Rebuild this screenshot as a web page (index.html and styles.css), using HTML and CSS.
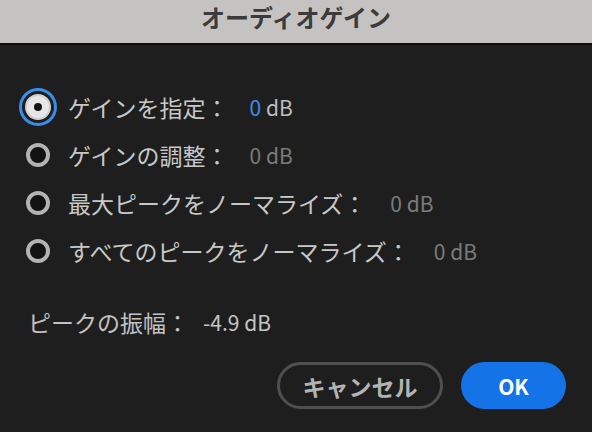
FILE: index.html
```html
<!DOCTYPE html>
<html lang="ja">
<head>
<meta charset="utf-8">
<title>オーディオゲイン</title>
<link rel="stylesheet" href="styles.css">
</head>
<body>
<div class="dialog">
  <header class="titlebar"><h1 class="title">オーディオゲイン</h1></header>
  <main class="content">
    <div class="options">
      <div class="option">
        <span class="radio-wrap"><span class="radio selected"></span></span>
        <span class="label">ゲインを指定：</span>
        <span class="value active"><span class="num">0</span> dB</span>
      </div>
      <div class="option">
        <span class="radio-wrap"><span class="radio"></span></span>
        <span class="label">ゲインの調整：</span>
        <span class="value">0 dB</span>
      </div>
      <div class="option">
        <span class="radio-wrap"><span class="radio"></span></span>
        <span class="label">最大ピークをノーマライズ：</span>
        <span class="value wide">0 dB</span>
      </div>
      <div class="option">
        <span class="radio-wrap"><span class="radio"></span></span>
        <span class="label">すべてのピークをノーマライズ：</span>
        <span class="value wide">0 dB</span>
      </div>
    </div>
    <div class="peak">
      <span class="label">ピークの振幅：</span>
      <span class="peak-value">-4.9 dB</span>
    </div>
    <div class="buttons">
      <button class="btn cancel">キャンセル</button>
      <button class="btn ok">OK</button>
    </div>
  </main>
</div>
</body>
</html>
```
FILE: styles.css
```css
* { box-sizing: border-box; }
html, body {
  margin: 0;
  padding: 0;
  width: 592px;
  height: 432px;
  overflow: hidden;
  background: #1e1e1e;
  font-family: "Noto Sans CJK JP", "Noto Sans", sans-serif;
}
.dialog {
  width: 592px;
  height: 432px;
  display: flex;
  flex-direction: column;
}
.titlebar {
  height: 45px;
  background: #c4c3c1;
  border-bottom: 2px solid #0b0b0b;
  display: flex;
  justify-content: center;
  align-items: flex-start;
}
.title {
  margin: 0;
  font-size: 24px;
  font-weight: 700;
  line-height: 34px;
  color: #3b3b3b;
}
.content {
  padding-top: 38px;
  display: flex;
  flex-direction: column;
}
.options {
  display: flex;
  flex-direction: column;
}
.option {
  height: 48px;
  display: flex;
  align-items: center;
}
.radio-wrap {
  width: 40px;
  height: 40px;
  margin-left: 18px;
  margin-right: 10px;
  display: flex;
  align-items: center;
  justify-content: center;
}
.radio {
  position: relative;
  width: 24px;
  height: 24px;
  border-radius: 50%;
  border: 4px solid #b3b3b3;
  background: #121212;
}
.radio.selected {
  width: 26px;
  height: 26px;
  border: 2px solid #cfcfcf;
  background: #e6e6e6;
  box-shadow: 0 0 0 3px #1e1e1e, 0 0 0 6px #3a8eea;
}
.radio.selected::after {
  content: "";
  position: absolute;
  left: 50%;
  top: 50%;
  width: 8px;
  height: 8px;
  margin: -4px 0 0 -4px;
  border-radius: 50%;
  background: #141414;
}
.label {
  font-size: 23px;
  line-height: 34px;
  color: #c8c8c8;
}
.value {
  margin-left: 21px;
  font-size: 21px;
  line-height: 34px;
  color: #7b7b7b;
}
.value.wide { margin-left: 24px; }
.value.active { color: #bdbdbd; }
.value.active .num { color: #3d8fe8; }
.peak {
  margin-top: 32px;
  padding-left: 28px;
  height: 30px;
  display: flex;
  align-items: center;
}
.peak .label { color: #c2c2c2; }
.peak-value {
  margin-left: 14px;
  font-size: 21px;
  line-height: 34px;
  color: #c4c4c4;
}
.buttons {
  margin-top: 25px;
  padding-right: 26px;
  display: flex;
  justify-content: flex-end;
  gap: 18px;
}
.btn {
  height: 47px;
  border-radius: 24px;
  font-family: "Noto Sans CJK JP", "Noto Sans", sans-serif;
  font-weight: 700;
  padding: 0;
  display: flex;
  align-items: center;
  justify-content: center;
}
.cancel {
  width: 166px;
  border: 3px solid #4f4f4f;
  background: transparent;
  color: #b3b3b3;
  font-size: 23px;
}
.ok {
  width: 105px;
  border: none;
  background: #1473e6;
  color: #ffffff;
  font-size: 21px;
}
```
